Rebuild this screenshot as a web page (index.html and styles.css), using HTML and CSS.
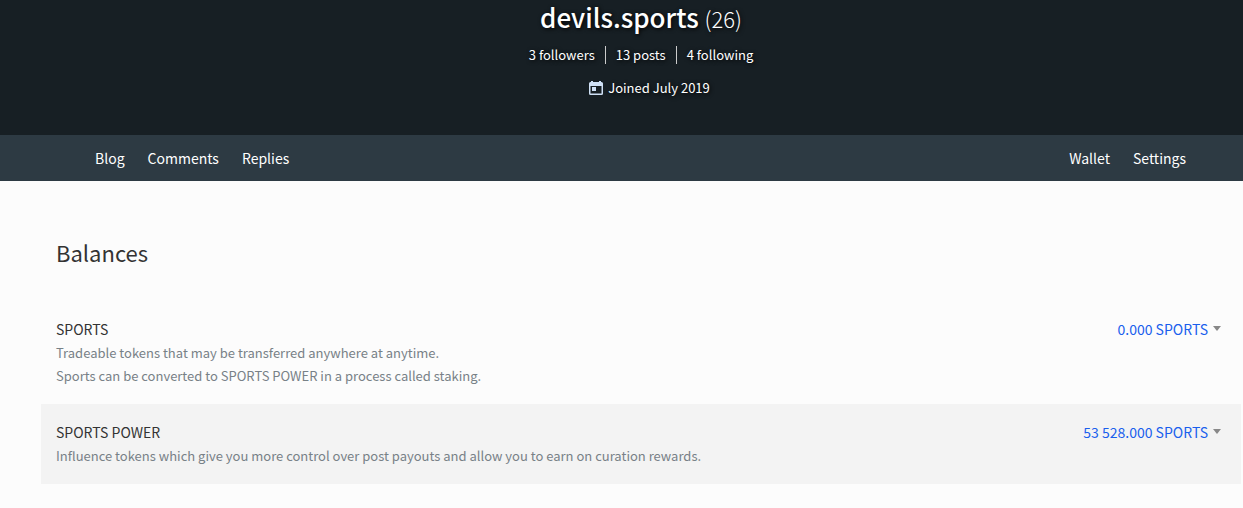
FILE: index.html
```
<!DOCTYPE html>
<html lang="en">
<head>
  <meta charset="UTF-8">
  <meta name="viewport" content="width=device-width, initial-scale=1.0">
  <title>devils.sports</title>
  <link rel="stylesheet" href="styles.css">
</head>
<body>
  <header class="profile-banner">
    <h1 class="profile-name">devils.sports <span class="reputation">(26)</span></h1>
    <div class="profile-stats">
      <a href="#followers">3 followers</a>
      <a href="#posts">13 posts</a>
      <a href="#following">4 following</a>
    </div>
    <p class="profile-info">
      <svg class="calendar-icon" viewBox="0 0 28 28" aria-hidden="true">
        <path fill-rule="evenodd" d="M4 0h4v2h12V0h4v2h1a3 3 0 0 1 3 3v20a3 3 0 0 1-3 3H3a3 3 0 0 1-3-3V5a3 3 0 0 1 3-3h1zM3 10v15h22V10zM6 12h8v8H6z"/>
      </svg>
      Joined July 2019
    </p>
  </header>

  <nav class="profile-nav">
    <div class="menu">
      <a href="#blog">Blog</a>
      <a href="#comments">Comments</a>
      <a href="#replies">Replies</a>
    </div>
    <div class="menu">
      <a href="#wallet">Wallet</a>
      <a href="#settings">Settings</a>
    </div>
  </nav>

  <main class="wallet">
    <h2>Balances</h2>
    <section class="balance-row">
      <div class="token">
        <h3>SPORTS</h3>
        <p>Tradeable tokens that may be transferred anywhere at anytime.</p>
        <p>Sports can be converted to SPORTS POWER in a process called staking.</p>
      </div>
      <button class="amount" type="button">0.000 SPORTS</button>
    </section>
    <section class="balance-row zebra">
      <div class="token">
        <h3>SPORTS POWER</h3>
        <p>Influence tokens which give you more control over post payouts and allow you to earn on curation rewards.</p>
      </div>
      <button class="amount" type="button">53 528.000 SPORTS</button>
    </section>
  </main>
</body>
</html>
```
FILE: styles.css
```
* {
  box-sizing: border-box;
}

body {
  margin: 0;
  font-family: "Noto Sans CJK SC", "Open Sans", sans-serif;
  font-size: 14px;
  line-height: 23px;
  color: #333;
  background-color: #fcfcfc;
}

h1, h2, h3, p {
  margin: 0;
  font-weight: 400;
}

a {
  color: inherit;
  text-decoration: none;
}

.profile-banner {
  display: flex;
  flex-direction: column;
  align-items: center;
  padding: 0 2px 36px 41px;
  color: #fff;
  background-color: #171f24;
  text-shadow: 1px 1px 4px #000;
}

.profile-name {
  font-size: 26px;
  font-weight: 500;
  line-height: 34px;
}

.reputation {
  font-size: 22px;
  font-weight: 200;
}

.profile-stats {
  display: flex;
  margin-top: 11px;
  font-size: 13px;
  line-height: 18px;
}

.profile-stats a {
  padding: 0 10px;
}

.profile-stats a + a {
  border-left: 1px solid #ccc;
}

.profile-info {
  display: flex;
  align-items: center;
  gap: 5px;
  margin-top: 12px;
  padding-left: 17px;
  font-size: 13px;
  line-height: 23px;
}

.calendar-icon {
  width: 14px;
  height: 14px;
  fill: #cfe0f5;
}

.profile-nav {
  display: flex;
  justify-content: space-between;
  padding: 0 57px 0 95px;
  line-height: 46px;
  color: #fff;
  background-color: #2d3a43;
}

.menu {
  display: flex;
  gap: 23px;
}

.wallet {
  padding: 54px 2px 24px 41px;
}

.wallet h2 {
  padding: 0 15px;
  margin-bottom: 32px;
  font-size: 22px;
  line-height: 34px;
}

.balance-row {
  display: flex;
  justify-content: space-between;
  align-items: flex-start;
  padding: 17px 20px 17px 15px;
}

.zebra {
  background-color: #f3f3f3;
}

.token h3 {
  font-size: 14px;
}

.token p {
  font-size: 13px;
  color: #788187;
}

.amount {
  display: flex;
  align-items: center;
  gap: 5px;
  padding: 0;
  border: none;
  background: none;
  font: inherit;
  color: #1a5fed;
  white-space: nowrap;
  cursor: pointer;
}

.amount::after {
  content: "";
  margin-bottom: 3px;
  border: 4px solid transparent;
  border-top: 5px solid #888;
  border-bottom: none;
}
```
